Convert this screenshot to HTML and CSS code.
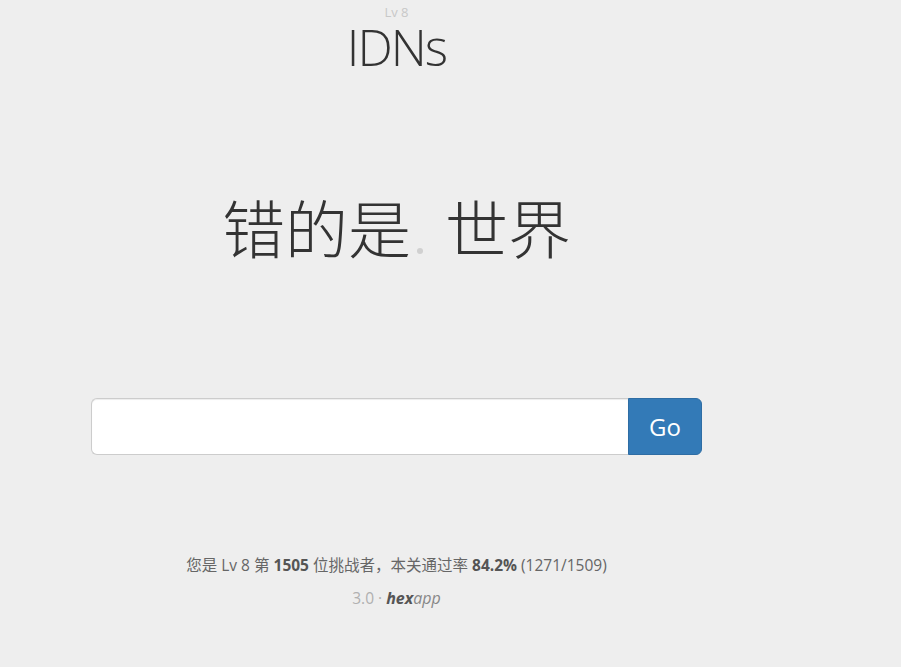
FILE: index.html
```html
<!DOCTYPE html>
<html lang="zh-CN">
<head>
<meta charset="utf-8">
<title>IDNs</title>
<link rel="stylesheet" href="styles.css">
</head>
<body>
<main class="page">
  <header class="head">
    <div class="lv">Lv 8</div>
    <h1 class="title">IDNs</h1>
  </header>
  <section class="puzzle">
    <span class="word">错的是</span><span class="dot"></span><span class="word">世界</span>
  </section>
  <form class="answer" onsubmit="return false;">
    <input class="answer-input" type="text" aria-label="answer">
    <button class="answer-btn" type="submit">Go</button>
  </form>
  <footer class="foot">
    <p class="stats">您是 Lv 8 第 <b>1505</b> 位挑战者，本关通过率 <b>84.2%</b> (1271/1509)</p>
    <p class="credit">3.0 · <span class="brand"><b>hex</b>app</span></p>
  </footer>
</main>
</body>
</html>
```
FILE: styles.css
```css
html, body {
  margin: 0;
  padding: 0;
  background: #eeeeee;
}
body {
  font-family: "Open Sans", "Noto Sans CJK SC", sans-serif;
  color: #333;
}
.page {
  width: 793px;
  display: flex;
  flex-direction: column;
  align-items: center;
  padding-top: 2px;
}
.head {
  display: flex;
  flex-direction: column;
  align-items: center;
}
.lv {
  font-size: 13px;
  line-height: 20px;
  color: #c8c8c8;
}
.title {
  margin: 0;
  font-size: 50px;
  font-weight: 300;
  line-height: 50px;
  color: #333;
  letter-spacing: -2px;
}
.puzzle {
  margin-top: 114px;
  display: flex;
  align-items: center;
  font-family: "Noto Sans CJK SC", sans-serif;
  font-size: 63px;
  font-weight: 300;
  line-height: 80px;
  color: #333;
}
.dot {
  width: 6px;
  height: 6px;
  border-radius: 50%;
  background: #d0d0d0;
  margin: 50px 22px 0 6px;
}
.answer {
  margin-top: 132px;
  display: flex;
  width: 611px;
  height: 57px;
}
.answer-input {
  flex: 1;
  box-sizing: border-box;
  height: 57px;
  border: 1px solid #cccccc;
  border-right: none;
  border-radius: 6px 0 0 6px;
  background: #fff;
  box-shadow: inset 0 1px 1px rgba(0,0,0,0.075);
  padding: 0 16px;
  font-size: 20px;
  outline: none;
}
.answer-btn {
  width: 74px;
  height: 57px;
  border: 1px solid #2e6da4;
  border-radius: 0 6px 6px 0;
  background: #337ab7;
  color: #fff;
  font-family: "Open Sans", sans-serif;
  font-size: 24px;
  padding: 0;
}
.foot {
  margin-top: 99px;
  display: flex;
  flex-direction: column;
  align-items: center;
  font-size: 15.5px;
}
.stats {
  margin: 0;
  line-height: 22px;
  color: #666;
}
.stats b {
  font-weight: 700;
  color: #555;
}
.credit {
  margin: 11px 0 0;
  line-height: 22px;
  color: #b0b0b0;
}
.brand {
  font-style: italic;
  color: #888;
  font-size: 16px;
}
.brand b {
  color: #555;
}
```
